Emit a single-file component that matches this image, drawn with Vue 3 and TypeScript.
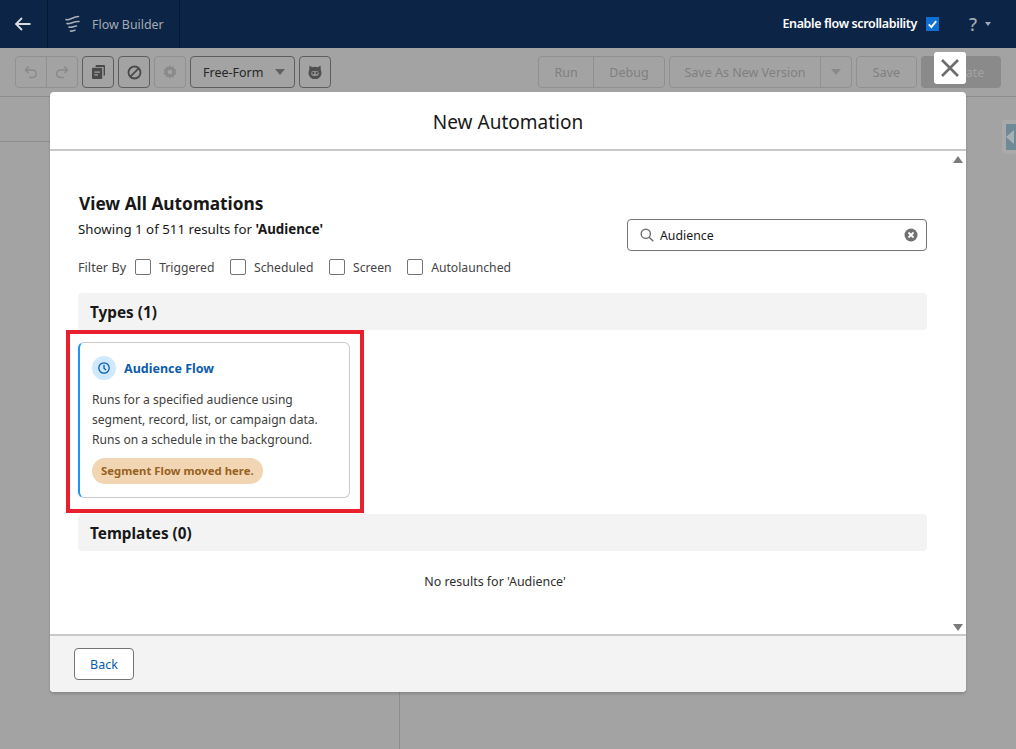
<script setup lang="ts">
const filters: string[] = ['Triggered', 'Scheduled', 'Screen', 'Autolaunched'];
</script>

<template>
  <div class="page">
    <header class="topbar">
      <button class="back-cell" aria-label="Back">
        <svg width="18" height="18" viewBox="0 0 18 18" fill="none" stroke="#d8dbe0" stroke-width="1.8">
          <path d="M16.5 9H2M8 3L2 9l6 6" />
        </svg>
      </button>
      <div class="app-cell">
        <svg width="15" height="18" viewBox="0 0 15 18" fill="none" stroke="#aab0ba" stroke-width="1.6" stroke-linecap="round">
          <path d="M1 4.500C4 6 8 1.500 13.500 1.500M2 8.500C5 9.500 9 6 14 6.500M4 12c2.500 1 4.500-1 7.500-1M5.500 16c1.500.5 3-.7 4.500-.7" />
        </svg>
        <span>Flow Builder</span>
      </div>
      <div class="top-right">
        <span class="scroll-label">Enable flow scrollability</span>
        <span class="top-check">
          <svg width="13" height="14" viewBox="0 0 14 14" fill="none" stroke="#fff" stroke-width="2">
            <path d="M3 7.500l2.800 2.800L11 4" />
          </svg>
        </span>
        <span class="help">?</span>
        <span class="help-caret"></span>
      </div>
    </header>

    <div class="toolbar">
      <div class="btn-group">
        <button class="tool dim">
          <svg width="14" height="14" viewBox="0 0 14 14" fill="none" stroke="#8a8a8a" stroke-width="1.500">
            <path d="M1.500 5h7a3.800 3.800 0 0 1 0 7.600H5M4.500 1.500L1.500 5l3 3" />
          </svg>
        </button>
        <button class="tool dim">
          <svg width="14" height="14" viewBox="0 0 14 14" fill="none" stroke="#8a8a8a" stroke-width="1.500">
            <path d="M12.500 5h-7a3.800 3.800 0 0 0 0 7.600H9M9.500 1.500l3 3.500-3 3" />
          </svg>
        </button>
      </div>
      <button class="tool solo">
        <svg width="13" height="14" viewBox="0 0 14 15" fill="#4a4a4a">
          <path d="M4 0h9a1 1 0 0 1 1 1v9.500a1 1 0 0 1-1 1h-.5V2H4zM1 3h9a1 1 0 0 1 1 1v10a1 1 0 0 1-1 1H1a1 1 0 0 1-1-1V4a1 1 0 0 1 1-1z" />
          <path d="M2.500 7h6v1.300h-6zM2.500 10h4v1.300h-4z" fill="#a3a3a3" />
        </svg>
      </button>
      <button class="tool solo">
        <svg width="15" height="15" viewBox="0 0 15 15" fill="none" stroke="#4a4a4a" stroke-width="1.800">
          <circle cx="7.500" cy="7.500" r="6" />
          <path d="M3.400 11.600l8.200-8.200" />
        </svg>
      </button>
      <button class="tool solo dim">
        <svg width="14" height="14" viewBox="0 0 14 14" fill="#8a8a8a">
          <path d="M7 0l1.300 2 2.300-.6.500 2.300 2.300.6L12.500 7l1 2.100-2.300.9-.6 2.200-2.300-.5L7 14l-1.300-2.300-2.300.5-.6-2.200-2.300-.9 1-2.100-.9-2.700 2.300-.6.500-2.300 2.300.6z" />
          <circle cx="7" cy="7" r="2.300" fill="#a3a3a3" />
        </svg>
      </button>
      <button class="mode-select">
        <span>Free-Form</span>
        <i class="caret dark"></i>
      </button>
      <button class="tool solo">
        <svg width="14" height="14" viewBox="0 0 14 14">
          <path d="M1.500 .500L4.200 2.300a6.500 6.500 0 0 1 5.600 0L12.500 .500l.3 4.500A6.500 6.500 0 1 1 1.200 5z" fill="#505050" />
          <rect x="3.200" y="6" width="7.600" height="5" rx="2.400" fill="#8f8f8f" />
          <circle cx="5.300" cy="8" r="1" fill="#404040" />
          <circle cx="8.700" cy="8" r="1" fill="#404040" />
        </svg>
      </button>

      <div class="toolbar-right">
        <div class="btn-group">
          <button class="text-btn run">Run</button>
          <button class="text-btn debug">Debug</button>
        </div>
        <div class="btn-group">
          <button class="text-btn save-as">Save As New Version</button>
          <button class="text-btn save-caret"><i class="caret"></i></button>
        </div>
        <button class="text-btn solo save">Save</button>
        <button class="activate">Activate</button>
      </div>
    </div>

    <div class="canvas">
      <div class="left-pane">
        <div class="pane-head"></div>
      </div>
      <div class="right-pane">
        <div class="pane-toggle"><i></i></div>
      </div>
    </div>

    <button class="modal-close" aria-label="Close">
      <svg width="20" height="20" viewBox="0 0 20 20" stroke="#6d6d6d" stroke-width="2.600">
        <path d="M2 2l16 16M18 2L2 18" />
      </svg>
    </button>

    <section class="modal">
      <header class="modal-head">New Automation</header>

      <div class="modal-body">
        <i class="scroll-up"></i>
        <i class="scroll-down"></i>

        <div class="intro">
          <div class="intro-text">
            <h2>View All Automations</h2>
            <p>Showing 1 of 511 results for <b>'Audience'</b></p>
          </div>
          <div class="search">
            <svg width="14" height="14" viewBox="0 0 14 14" fill="none" stroke="#707070" stroke-width="1.400">
              <circle cx="5.800" cy="5.800" r="4.600" />
              <path d="M9.200 9.200L13.300 13.300" />
            </svg>
            <span class="search-value">Audience</span>
            <svg width="14" height="14" viewBox="0 0 14 14">
              <circle cx="7" cy="7" r="6.500" fill="#707070" />
              <path d="M4.500 4.500l5 5M9.500 4.500l-5 5" stroke="#fff" stroke-width="1.800" />
            </svg>
          </div>
        </div>

        <div class="filters">
          <span class="filter-label">Filter By</span>
          <label v-for="name in filters" :key="name" class="filter">
            <span class="box"></span>
            <span>{{ name }}</span>
          </label>
        </div>

        <div class="section-bar">Types (1)</div>

        <div class="highlight">
          <article class="card">
            <div class="card-title">
              <span class="card-icon">
                <svg width="12" height="12" viewBox="0 0 12 12" fill="none" stroke="#0b5cab" stroke-width="1.300">
                  <circle cx="6" cy="6" r="5.200" />
                  <path d="M6 2.800V6.300l2 1.700" />
                </svg>
              </span>
              <span>Audience Flow</span>
            </div>
            <p>Runs for a specified audience using segment, record, list, or campaign data. Runs on a schedule in the background.</p>
            <span class="pill">Segment Flow moved here.</span>
          </article>
        </div>

        <div class="section-bar templates">Templates (0)</div>
        <p class="no-results">No results for 'Audience'</p>
      </div>

      <footer class="modal-foot">
        <button class="back-btn">Back</button>
      </footer>
    </section>
  </div>
</template>

<style>
html, body {
  margin: 0;
  background: #a3a3a3;
}
</style>

<style scoped>
.page {
  position: relative;
  width: 1016px;
  height: 749px;
  overflow: hidden;
  display: flex;
  flex-direction: column;
  background: #a3a3a3;
  font-family: "Noto Sans", "Open Sans", sans-serif;
  font-size: 12.5px;
  color: #181818;
}
button {
  font-family: inherit;
  padding: 0;
  cursor: pointer;
}

.topbar {
  flex: 0 0 48px;
  display: flex;
  background: #0c2546;
}
.back-cell {
  width: 48px;
  background: none;
  border: 0;
  border-right: 1px solid #06182f;
  display: flex;
  align-items: center;
  justify-content: center;
  padding-right: 2px;
}
.app-cell {
  width: 132px;
  box-sizing: border-box;
  display: flex;
  align-items: center;
  gap: 12px;
  padding-left: 17px;
  border-right: 1px solid #06182f;
  color: #a3aab5;
  font-size: 12.4px;
}
.top-right {
  margin-left: auto;
  display: flex;
  align-items: center;
  padding-right: 25px;
}
.scroll-label {
  color: #fff;
  font-weight: 600;
  font-size: 12.5px;
  letter-spacing: -0.36px;
  margin-top: -2px;
}
.top-check {
  width: 13px;
  height: 14px;
  margin-left: 9px;
  background: #0f6fd4;
  display: flex;
  align-items: center;
  justify-content: center;
}
.help {
  margin-left: 30px;
  color: #a3aab5;
  font-size: 18px;
  font-weight: 500;
}
.help-caret {
  margin-left: 8px;
  border-left: 3px solid transparent;
  border-right: 3px solid transparent;
  border-top: 4px solid #a3aab5;
}

.toolbar {
  flex: 0 0 49px;
  box-sizing: border-box;
  display: flex;
  align-items: flex-start;
  gap: 4px;
  padding: 8px 15px 0;
  background: #a3a3a3;
  border-bottom: 1px solid #8e8e8e;
}
.btn-group {
  display: flex;
}
.tool {
  width: 32px;
  height: 32px;
  box-sizing: border-box;
  background: transparent;
  border: 1px solid #8a8a8a;
  display: flex;
  align-items: center;
  justify-content: center;
}
.btn-group .tool:first-child {
  border-radius: 4px 0 0 4px;
}
.btn-group .tool:last-child {
  border-radius: 0 4px 4px 0;
  margin-left: -1px;
}
.tool.solo {
  border-radius: 4px;
  border-color: #5e5e5e;
}
.tool.dim {
  border-color: #909090;
}
.mode-select {
  width: 105px;
  height: 32px;
  box-sizing: border-box;
  background: transparent;
  border: 1px solid #5e5e5e;
  border-radius: 4px;
  display: flex;
  align-items: center;
  justify-content: space-between;
  padding: 0 9px 0 12px;
  font-size: 12.5px;
  color: #262626;
}
.caret {
  display: block;
  border-left: 5px solid transparent;
  border-right: 5px solid transparent;
  border-top: 6px solid #8a8a8a;
}
.caret.dark {
  border-top-color: #626262;
}
.toolbar-right {
  margin-left: auto;
  display: flex;
  gap: 4px;
}
.text-btn {
  height: 32px;
  box-sizing: border-box;
  background: transparent;
  border: 1px solid #909090;
  color: #808080;
  font-size: 12.5px;
}
.run {
  width: 56px;
  border-radius: 4px 0 0 4px;
}
.debug {
  width: 72px;
  margin-left: -1px;
  border-radius: 0 4px 4px 0;
}
.save-as {
  width: 152px;
  border-radius: 4px 0 0 4px;
}
.save-caret {
  width: 32px;
  margin-left: -1px;
  border-radius: 0 4px 4px 0;
  display: flex;
  align-items: center;
  justify-content: center;
}
.text-btn.solo {
  border-radius: 4px;
}
.save {
  width: 61px;
}
.activate {
  width: 80px;
  height: 32px;
  border: 0;
  border-radius: 4px;
  background: #8a8a8a;
  color: #a3a3a3;
  font-size: 12.5px;
}

.canvas {
  flex: 1;
  display: flex;
}
.left-pane {
  width: 400px;
  box-sizing: border-box;
  border-right: 1px solid #8e8e8e;
}
.pane-head {
  height: 44px;
  border-bottom: 1px solid #8e8e8e;
}
.right-pane {
  flex: 1;
  display: flex;
  justify-content: flex-end;
  align-items: flex-start;
}
.pane-toggle {
  width: 14px;
  height: 34px;
  margin-top: 23px;
  box-sizing: border-box;
  border: 4px solid #aaaaaa;
  border-right: 0;
  border-radius: 4px 0 0 4px;
  background: #6f8a97;
  overflow: hidden;
}
.pane-toggle i {
  display: block;
  margin-top: 6px;
  width: 0;
  border-top: 7px solid transparent;
  border-bottom: 7px solid transparent;
  border-right: 8px solid #a8b0b4;
}

.modal-close {
  position: absolute;
  left: 934px;
  top: 52px;
  width: 32px;
  height: 32px;
  background: #fff;
  border: 0;
  border-radius: 3px;
  display: flex;
  align-items: center;
  justify-content: center;
}
.modal {
  position: absolute;
  left: 50px;
  top: 92px;
  width: 916px;
  height: 600px;
  display: flex;
  flex-direction: column;
  background: #fff;
  border-radius: 4px;
  overflow: hidden;
  box-shadow: 0 2px 3px rgba(0, 0, 0, 0.16);
}
.modal-head {
  flex: 0 0 59px;
  box-sizing: border-box;
  padding-top: 3px;
  display: flex;
  align-items: center;
  justify-content: center;
  border-bottom: 2px solid #c9c9c9;
  font-size: 19px;
  color: #181818;
}
.modal-body {
  position: relative;
  flex: 1;
  padding: 41px 39px 0 28px;
}
.scroll-up,
.scroll-down {
  position: absolute;
  right: 3px;
  border-left: 5px solid transparent;
  border-right: 5px solid transparent;
}
.scroll-up {
  top: 5px;
  border-bottom: 7px solid #7b7b7b;
}
.scroll-down {
  bottom: 3px;
  border-top: 7px solid #7b7b7b;
}

.intro {
  display: flex;
  justify-content: space-between;
  align-items: flex-start;
}
h2 {
  margin: 0 0 0 1px;
  font-size: 17.3px;
  font-weight: 700;
  line-height: 24px;
}
.intro-text p {
  margin: 3px 0 0;
  line-height: 20px;
  font-size: 13.3px;
}
.search {
  width: 300px;
  height: 32px;
  margin-top: 27px;
  box-sizing: border-box;
  border: 1px solid #747474;
  border-radius: 4px;
  display: flex;
  align-items: center;
  padding: 0 8px 0 12px;
}
.search-value {
  flex: 1;
  margin-left: 6px;
  font-size: 12.3px;
}
.filters {
  display: flex;
  align-items: center;
  height: 20px;
  margin-top: 6px;
  color: #444;
  font-size: 12.2px;
}
.filter-label {
  margin-right: 9px;
  font-size: 12.7px;
}
.filter {
  display: flex;
  align-items: center;
  gap: 8px;
  margin-right: 15.5px;
}
.box {
  width: 16px;
  height: 16px;
  box-sizing: border-box;
  border: 1px solid #747474;
  border-radius: 2px;
}
.section-bar {
  height: 37px;
  display: flex;
  align-items: center;
  padding-left: 12px;
  background: #f3f3f3;
  border-radius: 4px;
  font-size: 15.3px;
  font-weight: 700;
  margin-top: 16px;
}
.highlight {
  width: 298px;
  box-sizing: border-box;
  margin-left: -12px;
  padding: 8px 10px 11px 8px;
  border: 4px solid #e8202d;
}
.card {
  height: 156px;
  box-sizing: border-box;
  padding: 13px 12px 0;
  background: #fff;
  border: 1px solid #c9c9c9;
  border-left: 2px solid #1b96ff;
  border-radius: 6px;
  font-size: 12.1px;
  color: #3e3e3c;
}
.card-title {
  display: flex;
  align-items: center;
  gap: 8px;
  font-size: 12.5px;
  font-weight: 700;
  color: #0b5cab;
}
.card-icon {
  width: 24px;
  height: 24px;
  border-radius: 50%;
  background: #cfe9fe;
  display: flex;
  align-items: center;
  justify-content: center;
}
.card p {
  margin: 10px 0 0;
  line-height: 20px;
}
.pill {
  display: inline-block;
  margin-top: 8px;
  padding: 0 9px;
  line-height: 26px;
  border-radius: 13px;
  background: #f2d6b3;
  color: #97611f;
  font-size: 11.35px;
  font-weight: 700;
}
.templates {
  margin-top: 1px;
}
.no-results {
  margin: 21px 0 0;
  padding-right: 15px;
  text-align: center;
  line-height: 20px;
  font-size: 12.45px;
  color: #2e2e2e;
}
.modal-foot {
  flex: 0 0 56px;
  box-sizing: border-box;
  background: #f3f3f3;
  border-top: 2px solid #c9c9c9;
  padding: 12px 24px;
}
.back-btn {
  width: 60px;
  height: 32px;
  background: #fff;
  border: 1px solid #747474;
  border-radius: 4px;
  color: #0b5cab;
  font-size: 12.5px;
}
</style>
